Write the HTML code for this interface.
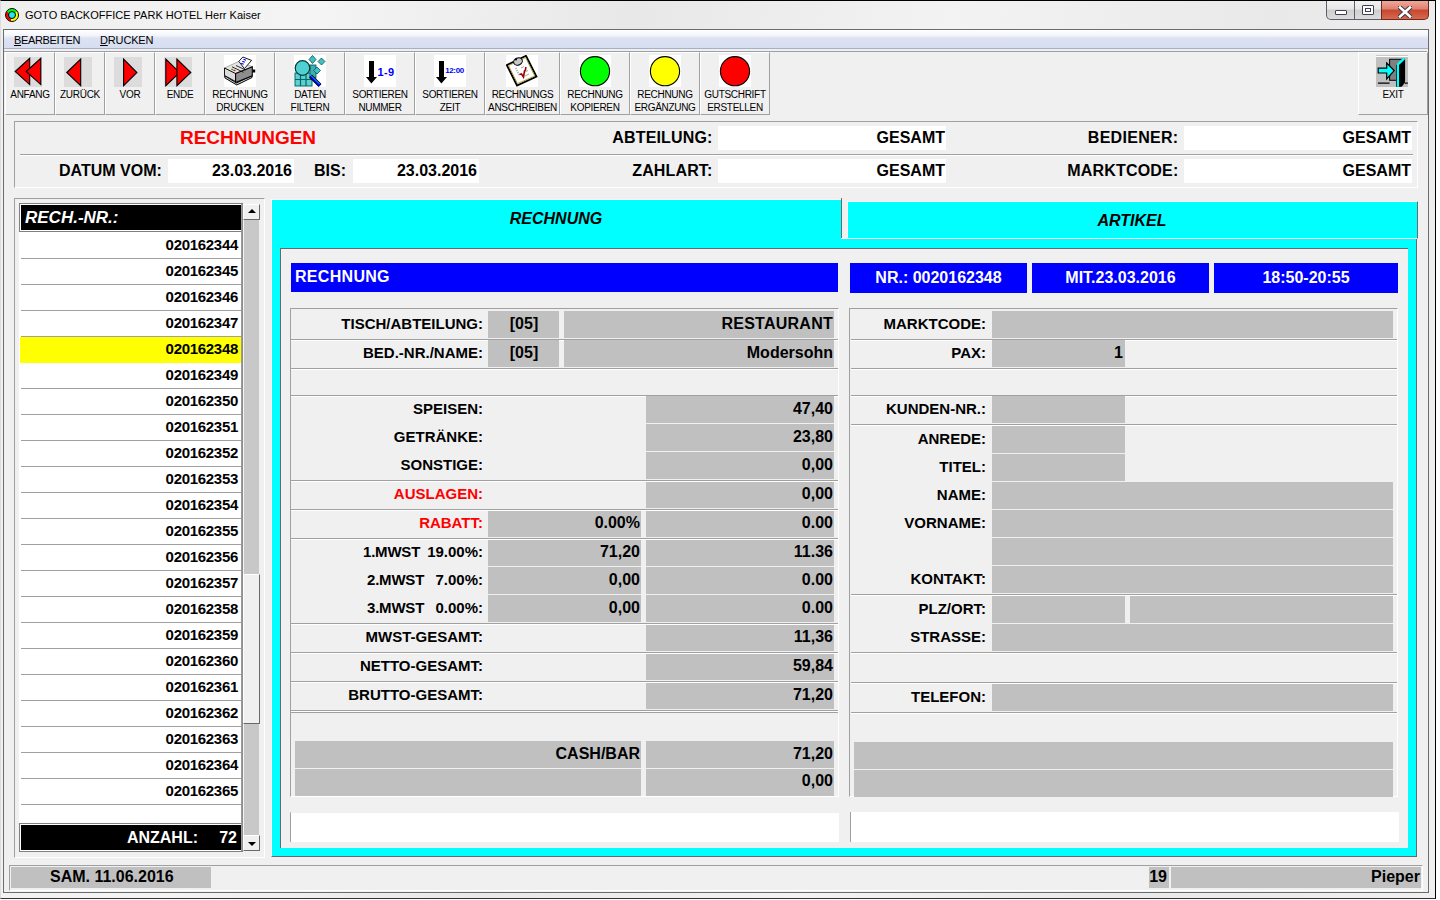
<!DOCTYPE html><html><head><meta charset='utf-8'><style>
html,body{margin:0;padding:0;}
body{width:1440px;height:900px;overflow:hidden;position:relative;background:#fff;font-family:"Liberation Sans",sans-serif;font-weight:bold;}
div{position:absolute;box-sizing:border-box;}
.t{white-space:nowrap;}
</style></head><body>

<div style='left:0px;top:0px;width:1436px;height:899px;background:linear-gradient(100deg,#efefef 0%,#f4f4f4 20%,#e8e8e8 40%,#f3f3f3 60%,#e9e9e9 80%,#f0f0f0 100%);border-top:1px solid #000;border-right:1px solid #000;border-bottom:1px solid #333;border-left:1px solid #dcdcdc;'></div>
<div style='left:3px;top:29px;width:1426px;height:864px;background:#f0f0f0;border:1px solid #6c6c6c;'></div>
<div style='left:5px;top:8px;width:14px;height:14px;border-radius:50%;background:conic-gradient(#00ff00 0deg 60deg,#ffff00 60deg 195deg,#ff0000 195deg 300deg,#00ff00 300deg 360deg);border:1px solid #000;'><div style='left:2px;top:2px;width:8px;height:8px;border-radius:50%;background:#20e8f0;border:1px solid #000;'></div></div>
<div class='t' style='top:10px;font-size:11px;line-height:11px;color:#000;font-weight:normal;left:25px;'>GOTO BACKOFFICE PARK HOTEL Herr Kaiser</div>
<div style='left:1326px;top:1px;width:56px;height:19px;border:1px solid #5a5f6a;border-top:none;border-radius:0 0 0 5px;background:linear-gradient(#f2f2f2 0%,#e6e6e6 45%,#cfcfcf 50%,#dcdcdc 100%);'></div>
<div style='left:1354px;top:1px;width:1px;height:18px;background:#5a5f6a;'></div>
<div style='left:1381px;top:1px;width:48px;height:19px;border:1px solid #6b2a20;border-top:none;border-radius:0 0 5px 0;background:linear-gradient(#f0a898 0%,#e08070 45%,#c8462e 50%,#d86850 100%);'></div>
<div style='left:1335px;top:10px;width:12px;height:5px;border:1px solid #3c4250;background:#fff;border-radius:1px;'></div>
<div style='left:1362px;top:5px;width:12px;height:10px;border:1px solid #3c4250;background:#fff;border-radius:1px;'><div style='left:2px;top:2px;width:6px;height:4px;border:1px solid #3c4250;'></div></div>
<div style='left:1398px;top:4px;width:14px;height:12px;'><svg width='14' height='12' viewBox='0 0 14 12'><path d='M2,1.5 L12,10.5 M12,1.5 L2,10.5' stroke='#3a3a4a' stroke-width='4.6' stroke-linecap='square'/><path d='M2,1.5 L12,10.5 M12,1.5 L2,10.5' stroke='#fff' stroke-width='2.6' stroke-linecap='square'/></svg></div>
<div style='left:4px;top:30px;width:1424px;height:19px;background:linear-gradient(#ffffff 0%,#f3f5fb 30%,#dde3f3 45%,#d7def0 100%);border-bottom:1px solid #a8b0c8;'></div>
<div class='t' style='top:35px;font-size:11px;line-height:11px;color:#000;font-weight:normal;left:14px;letter-spacing:-0.35px;'><u>B</u>EARBEITEN</div>
<div class='t' style='top:35px;font-size:11px;line-height:11px;color:#000;font-weight:normal;left:100px;letter-spacing:-0.15px;'><u>D</u>RUCKEN</div>
<div style='left:4px;top:51px;width:1423px;height:1px;background:#a0a0a0;'></div>
<div style='left:5px;top:52px;width:50px;height:63px;background:#f0f0f0;border-left:1px solid #fff;border-top:1px solid #fff;border-right:1px solid #a0a0a0;border-bottom:1px solid #a0a0a0;'></div>
<div class='t' style='top:90px;font-size:10px;line-height:10px;color:#000;font-weight:normal;left:-20.0px;width:100px;text-align:center;letter-spacing:-0.3px;'>ANFANG</div>
<div style='left:14px;top:57px;width:28px;height:30px;'><svg width='28' height='30' viewBox='0 0 28 30' style='display:block'><rect x='0' y='0' width='28' height='30' fill='#dcdcdc'/><polygon points='1.2,14.5 15.7,1.3 15.7,27.6' fill='#f00' stroke='#000' stroke-width='1.1' stroke-linejoin='miter'/><polygon points='12.2,14.5 26.8,1.3 26.8,27.6' fill='#f00' stroke='#000' stroke-width='1.1' stroke-linejoin='miter'/></svg></div>
<div style='left:55px;top:52px;width:50px;height:63px;background:#f0f0f0;border-left:1px solid #fff;border-top:1px solid #fff;border-right:1px solid #a0a0a0;border-bottom:1px solid #a0a0a0;'></div>
<div class='t' style='top:90px;font-size:10px;line-height:10px;color:#000;font-weight:normal;left:30.0px;width:100px;text-align:center;letter-spacing:-0.3px;'>ZURÜCK</div>
<div style='left:64px;top:57px;width:28px;height:30px;'><svg width='28' height='30' viewBox='0 0 28 30' style='display:block'><rect x='0' y='0' width='28' height='30' fill='#dcdcdc'/><polygon points='2.8,15.5 16.7,2 16.7,28.7' fill='#f00' stroke='#000' stroke-width='1.1' stroke-linejoin='miter'/></svg></div>
<div style='left:105px;top:52px;width:50px;height:63px;background:#f0f0f0;border-left:1px solid #fff;border-top:1px solid #fff;border-right:1px solid #a0a0a0;border-bottom:1px solid #a0a0a0;'></div>
<div class='t' style='top:90px;font-size:10px;line-height:10px;color:#000;font-weight:normal;left:80.0px;width:100px;text-align:center;letter-spacing:-0.3px;'>VOR</div>
<div style='left:114px;top:57px;width:28px;height:30px;'><svg width='28' height='30' viewBox='0 0 28 30' style='display:block'><rect x='0' y='0' width='28' height='30' fill='#dcdcdc'/><polygon points='9.6,2 9.6,28.7 22.9,15.5' fill='#f00' stroke='#000' stroke-width='1.1' stroke-linejoin='miter'/></svg></div>
<div style='left:155px;top:52px;width:50px;height:63px;background:#f0f0f0;border-left:1px solid #fff;border-top:1px solid #fff;border-right:1px solid #a0a0a0;border-bottom:1px solid #a0a0a0;'></div>
<div class='t' style='top:90px;font-size:10px;line-height:10px;color:#000;font-weight:normal;left:130.0px;width:100px;text-align:center;letter-spacing:-0.3px;'>ENDE</div>
<div style='left:164px;top:57px;width:28px;height:30px;'><svg width='28' height='30' viewBox='0 0 28 30' style='display:block'><rect x='0' y='0' width='28' height='30' fill='#dcdcdc'/><polygon points='1.8,2 1.8,28.7 15.7,15.5' fill='#f00' stroke='#000' stroke-width='1.1' stroke-linejoin='miter'/><polygon points='12.9,2 12.9,28.7 26.8,15.5' fill='#f00' stroke='#000' stroke-width='1.1' stroke-linejoin='miter'/></svg></div>
<div style='left:205px;top:52px;width:70px;height:63px;background:#f0f0f0;border-left:1px solid #fff;border-top:1px solid #fff;border-right:1px solid #a0a0a0;border-bottom:1px solid #a0a0a0;'></div>
<div class='t' style='top:90px;font-size:10px;line-height:10px;color:#000;font-weight:normal;left:190.0px;width:100px;text-align:center;letter-spacing:-0.3px;'>RECHNUNG</div>
<div class='t' style='top:103px;font-size:10px;line-height:10px;color:#000;font-weight:normal;left:190.0px;width:100px;text-align:center;letter-spacing:-0.3px;'>DRUCKEN</div>
<div style='left:224px;top:55px;width:32px;height:32px;'><svg width='32' height='32' viewBox='0 0 32 32' style='display:block'><rect width='32' height='32' fill='#fff'/><polygon points='0.5,20.5 12.5,28 28,20.5 28,22.5 12.8,30 1,23' fill='#d0d0d0' stroke='#000' stroke-width='1'/><polygon points='0.5,13 14.8,6.4 28.3,11.8 11.6,18.6' fill='#e4e4e4' stroke='#9a9a9a' stroke-width='0.8'/><polygon points='0.5,13 11.6,18.6 11.6,26.5 0.5,20.5' fill='#dcdcdc' stroke='#000' stroke-width='0.9'/><polygon points='11.6,18.6 28.3,11.8 28.3,20.8 11.6,27.5' fill='#8e8e8e' stroke='#000' stroke-width='1.1'/><rect x='28.6' y='14.5' width='2.6' height='3' fill='#000'/><polygon points='14.8,6.4 18.8,2 27.6,5.4 20.4,13.6' fill='#fff' stroke='#000' stroke-width='0.9'/><path d='M19.5,4.2 l2.5,1 M18.3,6.2 l2.5,1 M17.2,8.2 l2.5,1' stroke='#0000ff' stroke-width='1.2'/><rect x='7.2' y='13.8' width='2' height='1.3' fill='#00c000'/><rect x='9.4' y='14.8' width='2' height='1.3' fill='#ff0000'/><path d='M8,11.8 L19.5,17.3 M12,10.5 L21.5,15' stroke='#000' stroke-width='0.8'/></svg></div>
<div style='left:275px;top:52px;width:70px;height:63px;background:#f0f0f0;border-left:1px solid #fff;border-top:1px solid #fff;border-right:1px solid #a0a0a0;border-bottom:1px solid #a0a0a0;'></div>
<div class='t' style='top:90px;font-size:10px;line-height:10px;color:#000;font-weight:normal;left:260.0px;width:100px;text-align:center;letter-spacing:-0.3px;'>DATEN</div>
<div class='t' style='top:103px;font-size:10px;line-height:10px;color:#000;font-weight:normal;left:260.0px;width:100px;text-align:center;letter-spacing:-0.3px;'>FILTERN</div>
<div style='left:294px;top:55px;width:32px;height:32px;'><svg width='32' height='32' viewBox='0 0 32 32' style='display:block'><rect width='32' height='32' fill='#fff'/><rect x='1' y='18' width='17' height='13' fill='#5fcfcf' stroke='#006868' stroke-width='1'/><path d='M1,24.5 H18 M6.5,18 V31 M12,18 V31' stroke='#006868' stroke-width='1.2'/><rect x='16' y='10' width='6' height='13' fill='#3fb0b0' stroke='#005050' stroke-width='0.8'/><circle cx='8.5' cy='13' r='7.3' fill='#50d0d0' stroke='#003838' stroke-width='1.2'/><line x1='16.5' y1='21' x2='26' y2='30.5' stroke='#000' stroke-width='4'/><line x1='16.5' y1='21' x2='26' y2='30.5' stroke='#0000ff' stroke-width='2.4'/><line x1='17' y1='20.5' x2='25.5' y2='29' stroke='#00ffff' stroke-width='0.8'/><polygon points='18.5,0.5 22,4.5 18.5,8.5 15,4.5' fill='#40c0c0' stroke='#005858' stroke-width='0.8'/><polygon points='27.5,3 31,6.5 27.5,10 24,6.5' fill='#40c0c0' stroke='#005858' stroke-width='0.8'/><polygon points='23,12 26.5,15.5 23,19 19.5,15.5' fill='#40c0c0' stroke='#005858' stroke-width='0.8'/></svg></div>
<div style='left:345px;top:52px;width:70px;height:63px;background:#f0f0f0;border-left:1px solid #fff;border-top:1px solid #fff;border-right:1px solid #a0a0a0;border-bottom:1px solid #a0a0a0;'></div>
<div class='t' style='top:90px;font-size:10px;line-height:10px;color:#000;font-weight:normal;left:330.0px;width:100px;text-align:center;letter-spacing:-0.3px;'>SORTIEREN</div>
<div class='t' style='top:103px;font-size:10px;line-height:10px;color:#000;font-weight:normal;left:330.0px;width:100px;text-align:center;letter-spacing:-0.3px;'>NUMMER</div>
<div style='left:364px;top:55px;width:32px;height:32px;'><svg width='32' height='32' viewBox='0 0 32 32' style='display:block'><rect width='32' height='32' fill='#fff'/><polygon points='5,6 10,6 10,22 13,22 7.4,28.5 2,22 5,22' fill='#000'/><text x='13.5' y='21' font-family='Liberation Sans' font-weight='bold' font-size='11' fill='#0000ff' letter-spacing='0.3'>1-9</text></svg></div>
<div style='left:415px;top:52px;width:70px;height:63px;background:#f0f0f0;border-left:1px solid #fff;border-top:1px solid #fff;border-right:1px solid #a0a0a0;border-bottom:1px solid #a0a0a0;'></div>
<div class='t' style='top:90px;font-size:10px;line-height:10px;color:#000;font-weight:normal;left:400.0px;width:100px;text-align:center;letter-spacing:-0.3px;'>SORTIEREN</div>
<div class='t' style='top:103px;font-size:10px;line-height:10px;color:#000;font-weight:normal;left:400.0px;width:100px;text-align:center;letter-spacing:-0.3px;'>ZEIT</div>
<div style='left:434px;top:55px;width:32px;height:32px;'><svg width='32' height='32' viewBox='0 0 32 32' style='display:block'><rect width='32' height='32' fill='#fff'/><polygon points='5,6 10,6 10,22 13,22 7.4,28.5 2,22 5,22' fill='#000'/><text x='11.2' y='18' font-family='Liberation Sans' font-weight='bold' font-size='8' fill='#0000ff' textLength='19'>12:00</text></svg></div>
<div style='left:485px;top:52px;width:75px;height:63px;background:#f0f0f0;border-left:1px solid #fff;border-top:1px solid #fff;border-right:1px solid #a0a0a0;border-bottom:1px solid #a0a0a0;'></div>
<div class='t' style='top:90px;font-size:10px;line-height:10px;color:#000;font-weight:normal;left:472.5px;width:100px;text-align:center;letter-spacing:-0.3px;'>RECHNUNGS</div>
<div class='t' style='top:103px;font-size:10px;line-height:10px;color:#000;font-weight:normal;left:472.5px;width:100px;text-align:center;letter-spacing:-0.3px;'>ANSCHREIBEN</div>
<div style='left:506px;top:55px;width:32px;height:32px;'><svg width='32' height='32' viewBox='0 0 32 32' style='display:block'><rect width='32' height='32' fill='#fff'/><polygon points='0.8,10 20,0.8 30.5,21.5 11,30.5' fill='#fff' stroke='#000' stroke-width='1.8'/><polygon points='2.6,10.6 19.6,2.6 28.7,21 11.5,28.6' fill='none' stroke='#a09020' stroke-width='0.8'/><ellipse cx='12' cy='6.5' rx='4.5' ry='3.5' fill='#c8c8c8' stroke='#000' stroke-width='1' transform='rotate(-25 12 6.5)'/><circle cx='10' cy='4.5' r='1' fill='#000'/><path d='M9,14 l2,-1 M10,16 l2,-1 M11,18 l2,-1 M12,20 l2,-1 M15,13 l3,-1.5 M19,17 l3,-1.5 M19,21 l4,-2' stroke='#909090' stroke-width='0.8'/><path d='M13.5,19.5 L15.5,19 L17.5,22 L18.5,16 L19.5,15 L19.8,12' stroke='#a00000' stroke-width='1.6' fill='none'/></svg></div>
<div style='left:560px;top:52px;width:70px;height:63px;background:#f0f0f0;border-left:1px solid #fff;border-top:1px solid #fff;border-right:1px solid #a0a0a0;border-bottom:1px solid #a0a0a0;'></div>
<div class='t' style='top:90px;font-size:10px;line-height:10px;color:#000;font-weight:normal;left:545.0px;width:100px;text-align:center;letter-spacing:-0.3px;'>RECHNUNG</div>
<div class='t' style='top:103px;font-size:10px;line-height:10px;color:#000;font-weight:normal;left:545.0px;width:100px;text-align:center;letter-spacing:-0.3px;'>KOPIEREN</div>
<div style='left:579px;top:55px;width:32px;height:32px;'><svg width='32' height='32' viewBox='0 0 32 32' style='display:block'><rect width='32' height='32' fill='#fff'/><circle cx='16' cy='16.2' r='14.6' fill='#00ff00' stroke='#000' stroke-width='1.1'/></svg></div>
<div style='left:630px;top:52px;width:70px;height:63px;background:#f0f0f0;border-left:1px solid #fff;border-top:1px solid #fff;border-right:1px solid #a0a0a0;border-bottom:1px solid #a0a0a0;'></div>
<div class='t' style='top:90px;font-size:10px;line-height:10px;color:#000;font-weight:normal;left:615.0px;width:100px;text-align:center;letter-spacing:-0.3px;'>RECHNUNG</div>
<div class='t' style='top:103px;font-size:10px;line-height:10px;color:#000;font-weight:normal;left:615.0px;width:100px;text-align:center;letter-spacing:-0.3px;'>ERGÄNZUNG</div>
<div style='left:649px;top:55px;width:32px;height:32px;'><svg width='32' height='32' viewBox='0 0 32 32' style='display:block'><rect width='32' height='32' fill='#fff'/><circle cx='16' cy='16.2' r='14.6' fill='#ffff00' stroke='#000' stroke-width='1.1'/></svg></div>
<div style='left:700px;top:52px;width:70px;height:63px;background:#f0f0f0;border-left:1px solid #fff;border-top:1px solid #fff;border-right:1px solid #a0a0a0;border-bottom:1px solid #a0a0a0;'></div>
<div class='t' style='top:90px;font-size:10px;line-height:10px;color:#000;font-weight:normal;left:685.0px;width:100px;text-align:center;letter-spacing:-0.3px;'>GUTSCHRIFT</div>
<div class='t' style='top:103px;font-size:10px;line-height:10px;color:#000;font-weight:normal;left:685.0px;width:100px;text-align:center;letter-spacing:-0.3px;'>ERSTELLEN</div>
<div style='left:719px;top:55px;width:32px;height:32px;'><svg width='32' height='32' viewBox='0 0 32 32' style='display:block'><rect width='32' height='32' fill='#fff'/><circle cx='16' cy='16.2' r='14.6' fill='#ff0000' stroke='#000' stroke-width='1.1'/></svg></div>
<div style='left:1358px;top:52px;width:70px;height:63px;background:#f0f0f0;border-left:1px solid #fff;border-top:1px solid #fff;border-right:1px solid #a0a0a0;border-bottom:1px solid #a0a0a0;'></div>
<div class='t' style='top:90px;font-size:10px;line-height:10px;color:#000;font-weight:normal;left:1343.0px;width:100px;text-align:center;letter-spacing:-0.3px;'>EXIT</div>
<div style='left:1376px;top:55px;width:32px;height:32px;'><svg width='32' height='32' viewBox='0 0 32 32' style='display:block'><rect x='0' y='0' width='32' height='1' fill='#c8c8c8'/><rect x='0' y='1' width='32' height='1' fill='#fff'/><rect x='0' y='2' width='32' height='30' fill='#c0c0c0'/><rect x='13.6' y='4.3' width='15' height='21' fill='#808080' stroke='#000' stroke-width='1'/><polygon points='20,10.2 28.9,3.5 28.9,27.6 25.8,31.8 20,31.8' fill='#000'/><path d='M21.9,31.8 V9.5 L28.3,3.3' stroke='#00ffff' stroke-width='2.3' fill='none'/><polygon points='2.2,13.2 10.7,13.2 10.7,8 18.2,15.6 10.7,24 10.7,18 2.2,18' fill='#00ffff' stroke='#000' stroke-width='1.2'/><path d='M2,28.2 H13.6 M28.9,28.2 H31.8' stroke='#000' stroke-width='1.2'/></svg></div>
<div style='left:14px;top:121px;width:1404px;height:67px;border-top:1px solid #a0a0a0;border-left:1px solid #a0a0a0;border-right:1px solid #fff;border-bottom:1px solid #fff;'></div>
<div style='left:20px;top:154px;width:1393px;height:1px;background:#a0a0a0;'></div>
<div style='left:20px;top:155px;width:1393px;height:1px;background:#ffffff;'></div>
<div class='t' style='top:128px;font-size:19px;line-height:19px;color:#ff0000;left:98.0px;width:300px;text-align:center;'>RECHNUNGEN</div>
<div class='t' style='top:130px;font-size:16px;line-height:16px;color:#000;left:312.5px;width:400px;text-align:right;letter-spacing:0.15px;'>ABTEILUNG:</div>
<div style='left:718px;top:126px;width:228px;height:24px;background:#fff;'></div>
<div class='t' style='top:130px;font-size:16px;line-height:16px;color:#000;left:545px;width:400px;text-align:right;'>GESAMT</div>
<div class='t' style='top:130px;font-size:16px;line-height:16px;color:#000;left:778.5px;width:400px;text-align:right;letter-spacing:0.3px;'>BEDIENER:</div>
<div style='left:1184px;top:126px;width:228px;height:24px;background:#fff;'></div>
<div class='t' style='top:130px;font-size:16px;line-height:16px;color:#000;left:1011px;width:400px;text-align:right;'>GESAMT</div>
<div class='t' style='top:163px;font-size:16px;line-height:16px;color:#000;left:59px;'>DATUM VOM:</div>
<div style='left:168px;top:159px;width:126px;height:24px;background:#fff;'></div>
<div class='t' style='top:163px;font-size:16px;line-height:16px;color:#000;left:-108px;width:400px;text-align:right;'>23.03.2016</div>
<div class='t' style='top:163px;font-size:16px;line-height:16px;color:#000;left:314px;'>BIS:</div>
<div style='left:353px;top:159px;width:126px;height:24px;background:#fff;'></div>
<div class='t' style='top:163px;font-size:16px;line-height:16px;color:#000;left:77px;width:400px;text-align:right;'>23.03.2016</div>
<div class='t' style='top:163px;font-size:16px;line-height:16px;color:#000;left:312.5px;width:400px;text-align:right;letter-spacing:0.15px;'>ZAHLART:</div>
<div style='left:718px;top:159px;width:228px;height:24px;background:#fff;'></div>
<div class='t' style='top:163px;font-size:16px;line-height:16px;color:#000;left:545px;width:400px;text-align:right;'>GESAMT</div>
<div class='t' style='top:163px;font-size:16px;line-height:16px;color:#000;left:778.5px;width:400px;text-align:right;letter-spacing:0.2px;'>MARKTCODE:</div>
<div style='left:1184px;top:159px;width:228px;height:24px;background:#fff;'></div>
<div class='t' style='top:163px;font-size:16px;line-height:16px;color:#000;left:1011px;width:400px;text-align:right;'>GESAMT</div>
<div style='left:14px;top:198px;width:251px;height:660px;border-top:1px solid #a0a0a0;border-left:1px solid #a0a0a0;border-right:1px solid #fff;border-bottom:1px solid #fff;'></div>
<div style='left:19px;top:203px;width:224px;height:29px;background:#000;border:1px solid #808080;box-shadow:inset 1px 1px 0 #fff,inset -1px -1px 0 #fff;'></div>
<div class='t' style='top:209px;font-size:17px;line-height:17px;color:#fff;font-style:italic;left:25px;'>RECH.-NR.:</div>
<div style='left:19px;top:232px;width:222px;height:591px;background:#fff;'></div>
<div style='left:21px;top:258px;width:220px;height:1px;background:#a0a0a0;'></div>
<div class='t' style='top:237px;font-size:15px;line-height:15px;color:#000;left:-162px;width:400px;text-align:right;letter-spacing:-0.3px;'>020162344</div>
<div style='left:21px;top:284px;width:220px;height:1px;background:#a0a0a0;'></div>
<div class='t' style='top:263px;font-size:15px;line-height:15px;color:#000;left:-162px;width:400px;text-align:right;letter-spacing:-0.3px;'>020162345</div>
<div style='left:21px;top:310px;width:220px;height:1px;background:#a0a0a0;'></div>
<div class='t' style='top:289px;font-size:15px;line-height:15px;color:#000;left:-162px;width:400px;text-align:right;letter-spacing:-0.3px;'>020162346</div>
<div style='left:21px;top:336px;width:220px;height:1px;background:#a0a0a0;'></div>
<div class='t' style='top:315px;font-size:15px;line-height:15px;color:#000;left:-162px;width:400px;text-align:right;letter-spacing:-0.3px;'>020162347</div>
<div style='left:20px;top:337px;width:221px;height:26px;background:#ffff00;'></div>
<div class='t' style='top:341px;font-size:15px;line-height:15px;color:#000;left:-162px;width:400px;text-align:right;letter-spacing:-0.3px;'>020162348</div>
<div style='left:21px;top:388px;width:220px;height:1px;background:#a0a0a0;'></div>
<div class='t' style='top:367px;font-size:15px;line-height:15px;color:#000;left:-162px;width:400px;text-align:right;letter-spacing:-0.3px;'>020162349</div>
<div style='left:21px;top:414px;width:220px;height:1px;background:#a0a0a0;'></div>
<div class='t' style='top:393px;font-size:15px;line-height:15px;color:#000;left:-162px;width:400px;text-align:right;letter-spacing:-0.3px;'>020162350</div>
<div style='left:21px;top:440px;width:220px;height:1px;background:#a0a0a0;'></div>
<div class='t' style='top:419px;font-size:15px;line-height:15px;color:#000;left:-162px;width:400px;text-align:right;letter-spacing:-0.3px;'>020162351</div>
<div style='left:21px;top:466px;width:220px;height:1px;background:#a0a0a0;'></div>
<div class='t' style='top:445px;font-size:15px;line-height:15px;color:#000;left:-162px;width:400px;text-align:right;letter-spacing:-0.3px;'>020162352</div>
<div style='left:21px;top:492px;width:220px;height:1px;background:#a0a0a0;'></div>
<div class='t' style='top:471px;font-size:15px;line-height:15px;color:#000;left:-162px;width:400px;text-align:right;letter-spacing:-0.3px;'>020162353</div>
<div style='left:21px;top:518px;width:220px;height:1px;background:#a0a0a0;'></div>
<div class='t' style='top:497px;font-size:15px;line-height:15px;color:#000;left:-162px;width:400px;text-align:right;letter-spacing:-0.3px;'>020162354</div>
<div style='left:21px;top:544px;width:220px;height:1px;background:#a0a0a0;'></div>
<div class='t' style='top:523px;font-size:15px;line-height:15px;color:#000;left:-162px;width:400px;text-align:right;letter-spacing:-0.3px;'>020162355</div>
<div style='left:21px;top:570px;width:220px;height:1px;background:#a0a0a0;'></div>
<div class='t' style='top:549px;font-size:15px;line-height:15px;color:#000;left:-162px;width:400px;text-align:right;letter-spacing:-0.3px;'>020162356</div>
<div style='left:21px;top:596px;width:220px;height:1px;background:#a0a0a0;'></div>
<div class='t' style='top:575px;font-size:15px;line-height:15px;color:#000;left:-162px;width:400px;text-align:right;letter-spacing:-0.3px;'>020162357</div>
<div style='left:21px;top:622px;width:220px;height:1px;background:#a0a0a0;'></div>
<div class='t' style='top:601px;font-size:15px;line-height:15px;color:#000;left:-162px;width:400px;text-align:right;letter-spacing:-0.3px;'>020162358</div>
<div style='left:21px;top:648px;width:220px;height:1px;background:#a0a0a0;'></div>
<div class='t' style='top:627px;font-size:15px;line-height:15px;color:#000;left:-162px;width:400px;text-align:right;letter-spacing:-0.3px;'>020162359</div>
<div style='left:21px;top:674px;width:220px;height:1px;background:#a0a0a0;'></div>
<div class='t' style='top:653px;font-size:15px;line-height:15px;color:#000;left:-162px;width:400px;text-align:right;letter-spacing:-0.3px;'>020162360</div>
<div style='left:21px;top:700px;width:220px;height:1px;background:#a0a0a0;'></div>
<div class='t' style='top:679px;font-size:15px;line-height:15px;color:#000;left:-162px;width:400px;text-align:right;letter-spacing:-0.3px;'>020162361</div>
<div style='left:21px;top:726px;width:220px;height:1px;background:#a0a0a0;'></div>
<div class='t' style='top:705px;font-size:15px;line-height:15px;color:#000;left:-162px;width:400px;text-align:right;letter-spacing:-0.3px;'>020162362</div>
<div style='left:21px;top:752px;width:220px;height:1px;background:#a0a0a0;'></div>
<div class='t' style='top:731px;font-size:15px;line-height:15px;color:#000;left:-162px;width:400px;text-align:right;letter-spacing:-0.3px;'>020162363</div>
<div style='left:21px;top:778px;width:220px;height:1px;background:#a0a0a0;'></div>
<div class='t' style='top:757px;font-size:15px;line-height:15px;color:#000;left:-162px;width:400px;text-align:right;letter-spacing:-0.3px;'>020162364</div>
<div style='left:21px;top:804px;width:220px;height:1px;background:#a0a0a0;'></div>
<div class='t' style='top:783px;font-size:15px;line-height:15px;color:#000;left:-162px;width:400px;text-align:right;letter-spacing:-0.3px;'>020162365</div>
<div style='left:19px;top:823px;width:224px;height:29px;background:#000;border:1px solid #808080;box-shadow:inset 1px 1px 0 #fff,inset -1px -1px 0 #fff;'></div>
<div class='t' style='top:830px;font-size:16px;line-height:16px;color:#fff;left:-202px;width:400px;text-align:right;'>ANZAHL:</div>
<div class='t' style='top:830px;font-size:16px;line-height:16px;color:#fff;left:-163px;width:400px;text-align:right;'>72</div>
<div style='left:241px;top:204px;width:2px;height:647px;background:linear-gradient(90deg,#a0a0a0,#888);'></div>
<div style='left:243px;top:204px;width:17px;height:647px;background:#c8c8c8;border-left:1px solid #f4f4f4;border-right:1px solid #f0f0f0;'></div>
<div style='left:243px;top:204px;width:17px;height:16px;background:#f0f0f0;border-left:1px solid #fff;border-top:1px solid #fff;border-right:1px solid #696969;border-bottom:1px solid #696969;'></div>
<div style='left:248px;top:209px;width:0;height:0;border-left:4px solid transparent;border-right:4px solid transparent;border-bottom:4px solid #000;'></div>
<div style='left:243px;top:574px;width:17px;height:150px;background:#f0f0f0;border-left:1px solid #fff;border-top:1px solid #fff;border-right:1px solid #696969;border-bottom:1px solid #696969;'></div>
<div style='left:243px;top:835px;width:17px;height:16px;background:#f0f0f0;border-left:1px solid #fff;border-top:1px solid #fff;border-right:1px solid #696969;border-bottom:1px solid #696969;'></div>
<div style='left:248px;top:842px;width:0;height:0;border-left:4px solid transparent;border-right:4px solid transparent;border-top:4px solid #000;'></div>
<div style='left:271px;top:199px;width:1146px;height:658px;background:#00ffff;border-top:1px solid #fff;border-left:1px solid #fff;border-right:1px solid #696969;border-bottom:1px solid #696969;'></div>
<div style='left:841px;top:198px;width:577px;height:3px;background:#f0f0f0;'></div>
<div style='left:841px;top:198px;width:6px;height:41px;background:#f0f0f0;'></div>
<div style='left:841px;top:198px;width:1px;height:41px;background:#696969;'></div>
<div style='left:847px;top:201px;width:571px;height:38px;background:#00ffff;border-top:1px solid #fff;border-left:1px solid #fff;border-right:1px solid #696969;border-bottom:1px solid #fff;'></div>
<div style='left:841px;top:238px;width:576px;height:1px;background:#fff;'></div>
<div class='t' style='top:211px;font-size:16px;line-height:16px;color:#000;font-style:italic;left:406.0px;width:300px;text-align:center;'>RECHNUNG</div>
<div class='t' style='top:213px;font-size:16px;line-height:16px;color:#000;font-style:italic;left:982.0px;width:300px;text-align:center;'>ARTIKEL</div>
<div style='left:280px;top:248px;width:1128px;height:600px;background:#f0f0f0;border-top:1px solid #696969;border-left:1px solid #696969;'></div>
<div style='left:291px;top:263px;width:547px;height:29px;background:#0000ff;'></div>
<div class='t' style='top:269px;font-size:16px;line-height:16px;color:#fff;left:295px;letter-spacing:0.3px;'>RECHNUNG</div>
<div style='left:850px;top:263px;width:177px;height:30px;background:#0000ff;'></div>
<div class='t' style='top:270px;font-size:16px;line-height:16px;color:#fff;left:850.0px;width:177px;text-align:center;'>NR.: 0020162348</div>
<div style='left:1032px;top:263px;width:177px;height:30px;background:#0000ff;'></div>
<div class='t' style='top:270px;font-size:16px;line-height:16px;color:#fff;left:1032.0px;width:177px;text-align:center;'>MIT.23.03.2016</div>
<div style='left:1214px;top:263px;width:184px;height:30px;background:#0000ff;'></div>
<div class='t' style='top:270px;font-size:16px;line-height:16px;color:#fff;left:1214.0px;width:184px;text-align:center;'>18:50-20:55</div>
<div style='left:290px;top:308px;width:549px;height:489px;border-top:1px solid #a0a0a0;border-left:1px solid #a0a0a0;border-right:1px solid #fff;border-bottom:1px solid #fff;'></div>
<div class='t' style='top:316px;font-size:15px;line-height:15px;color:#000;left:83px;width:400px;text-align:right;'>TISCH/ABTEILUNG:</div>
<div style='left:488px;top:311px;width:71px;height:27px;background:#c0c0c0;'></div>
<div class='t' style='top:316px;font-size:16px;line-height:16px;color:#000;left:488.5px;width:71px;text-align:center;'>[05]</div>
<div style='left:564px;top:311px;width:270px;height:27px;background:#c0c0c0;'></div>
<div class='t' style='top:316px;font-size:16px;line-height:16px;color:#000;left:433px;width:400px;text-align:right;letter-spacing:0.25px;'>RESTAURANT</div>
<div style='left:291px;top:339px;width:547px;height:1px;background:#a0a0a0;'></div>
<div style='left:291px;top:340px;width:547px;height:1px;background:#ffffff;'></div>
<div class='t' style='top:345px;font-size:15px;line-height:15px;color:#000;left:83px;width:400px;text-align:right;'>BED.-NR./NAME:</div>
<div style='left:488px;top:340px;width:71px;height:27px;background:#c0c0c0;'></div>
<div class='t' style='top:345px;font-size:16px;line-height:16px;color:#000;left:488.5px;width:71px;text-align:center;'>[05]</div>
<div style='left:564px;top:340px;width:270px;height:27px;background:#c0c0c0;'></div>
<div class='t' style='top:345px;font-size:16px;line-height:16px;color:#000;left:433px;width:400px;text-align:right;'>Modersohn</div>
<div style='left:291px;top:368px;width:547px;height:1px;background:#a0a0a0;'></div>
<div style='left:291px;top:369px;width:547px;height:1px;background:#ffffff;'></div>
<div style='left:291px;top:395px;width:547px;height:1px;background:#a0a0a0;'></div>
<div style='left:291px;top:396px;width:547px;height:1px;background:#ffffff;'></div>
<div class='t' style='top:401px;font-size:15px;line-height:15px;color:#000;left:83px;width:400px;text-align:right;'>SPEISEN:</div>
<div style='left:646px;top:396px;width:188px;height:27px;background:#c0c0c0;'></div>
<div class='t' style='top:401px;font-size:16px;line-height:16px;color:#000;left:433px;width:400px;text-align:right;'>47,40</div>
<div class='t' style='top:429px;font-size:15px;line-height:15px;color:#000;left:83px;width:400px;text-align:right;'>GETRÄNKE:</div>
<div style='left:646px;top:424px;width:188px;height:27px;background:#c0c0c0;'></div>
<div class='t' style='top:429px;font-size:16px;line-height:16px;color:#000;left:433px;width:400px;text-align:right;'>23,80</div>
<div class='t' style='top:457px;font-size:15px;line-height:15px;color:#000;left:83px;width:400px;text-align:right;'>SONSTIGE:</div>
<div style='left:646px;top:452px;width:188px;height:27px;background:#c0c0c0;'></div>
<div class='t' style='top:457px;font-size:16px;line-height:16px;color:#000;left:433px;width:400px;text-align:right;'>0,00</div>
<div class='t' style='top:486px;font-size:15px;line-height:15px;color:#ff0000;left:83px;width:400px;text-align:right;'>AUSLAGEN:</div>
<div style='left:646px;top:481px;width:188px;height:27px;background:#c0c0c0;'></div>
<div class='t' style='top:486px;font-size:16px;line-height:16px;color:#000;left:433px;width:400px;text-align:right;'>0,00</div>
<div class='t' style='top:515px;font-size:15px;line-height:15px;color:#ff0000;left:83px;width:400px;text-align:right;'>RABATT:</div>
<div style='left:488px;top:510px;width:153px;height:27px;background:#c0c0c0;'></div>
<div class='t' style='top:515px;font-size:16px;line-height:16px;color:#000;left:240px;width:400px;text-align:right;'>0.00%</div>
<div style='left:646px;top:510px;width:188px;height:27px;background:#c0c0c0;'></div>
<div class='t' style='top:515px;font-size:16px;line-height:16px;color:#000;left:433px;width:400px;text-align:right;'>0.00</div>
<div class='t' style='top:544px;font-size:15px;line-height:15px;color:#000;left:83px;width:400px;text-align:right;'>19.00%:</div>
<div style='left:488px;top:539px;width:153px;height:27px;background:#c0c0c0;'></div>
<div class='t' style='top:544px;font-size:16px;line-height:16px;color:#000;left:240px;width:400px;text-align:right;'>71,20</div>
<div style='left:646px;top:539px;width:188px;height:27px;background:#c0c0c0;'></div>
<div class='t' style='top:544px;font-size:16px;line-height:16px;color:#000;left:433px;width:400px;text-align:right;'>11.36</div>
<div class='t' style='top:572px;font-size:15px;line-height:15px;color:#000;left:83px;width:400px;text-align:right;'>7.00%:</div>
<div style='left:488px;top:567px;width:153px;height:27px;background:#c0c0c0;'></div>
<div class='t' style='top:572px;font-size:16px;line-height:16px;color:#000;left:240px;width:400px;text-align:right;'>0,00</div>
<div style='left:646px;top:567px;width:188px;height:27px;background:#c0c0c0;'></div>
<div class='t' style='top:572px;font-size:16px;line-height:16px;color:#000;left:433px;width:400px;text-align:right;'>0.00</div>
<div class='t' style='top:600px;font-size:15px;line-height:15px;color:#000;left:83px;width:400px;text-align:right;'>0.00%:</div>
<div style='left:488px;top:595px;width:153px;height:27px;background:#c0c0c0;'></div>
<div class='t' style='top:600px;font-size:16px;line-height:16px;color:#000;left:240px;width:400px;text-align:right;'>0,00</div>
<div style='left:646px;top:595px;width:188px;height:27px;background:#c0c0c0;'></div>
<div class='t' style='top:600px;font-size:16px;line-height:16px;color:#000;left:433px;width:400px;text-align:right;'>0.00</div>
<div class='t' style='top:629px;font-size:15px;line-height:15px;color:#000;left:83px;width:400px;text-align:right;'>MWST-GESAMT:</div>
<div style='left:646px;top:624px;width:188px;height:27px;background:#c0c0c0;'></div>
<div class='t' style='top:629px;font-size:16px;line-height:16px;color:#000;left:433px;width:400px;text-align:right;'>11,36</div>
<div class='t' style='top:658px;font-size:15px;line-height:15px;color:#000;left:83px;width:400px;text-align:right;'>NETTO-GESAMT:</div>
<div style='left:646px;top:653px;width:188px;height:27px;background:#c0c0c0;'></div>
<div class='t' style='top:658px;font-size:16px;line-height:16px;color:#000;left:433px;width:400px;text-align:right;'>59,84</div>
<div class='t' style='top:687px;font-size:15px;line-height:15px;color:#000;left:83px;width:400px;text-align:right;'>BRUTTO-GESAMT:</div>
<div style='left:646px;top:682px;width:188px;height:27px;background:#c0c0c0;'></div>
<div class='t' style='top:687px;font-size:16px;line-height:16px;color:#000;left:433px;width:400px;text-align:right;'>71,20</div>
<div class='t' style='top:544px;font-size:15px;line-height:15px;color:#000;left:363px;letter-spacing:-0.2px;'>1.MWST</div>
<div class='t' style='top:572px;font-size:15px;line-height:15px;color:#000;left:367px;letter-spacing:-0.2px;'>2.MWST</div>
<div class='t' style='top:600px;font-size:15px;line-height:15px;color:#000;left:367px;letter-spacing:-0.2px;'>3.MWST</div>
<div style='left:291px;top:480px;width:547px;height:1px;background:#a0a0a0;'></div>
<div style='left:291px;top:481px;width:547px;height:1px;background:#ffffff;'></div>
<div style='left:291px;top:509px;width:547px;height:1px;background:#a0a0a0;'></div>
<div style='left:291px;top:510px;width:547px;height:1px;background:#ffffff;'></div>
<div style='left:291px;top:538px;width:547px;height:1px;background:#a0a0a0;'></div>
<div style='left:291px;top:539px;width:547px;height:1px;background:#ffffff;'></div>
<div style='left:291px;top:623px;width:547px;height:1px;background:#a0a0a0;'></div>
<div style='left:291px;top:624px;width:547px;height:1px;background:#ffffff;'></div>
<div style='left:291px;top:652px;width:547px;height:1px;background:#a0a0a0;'></div>
<div style='left:291px;top:653px;width:547px;height:1px;background:#ffffff;'></div>
<div style='left:291px;top:681px;width:547px;height:1px;background:#a0a0a0;'></div>
<div style='left:291px;top:682px;width:547px;height:1px;background:#ffffff;'></div>
<div style='left:291px;top:710px;width:547px;height:1px;background:#a0a0a0;'></div>
<div style='left:291px;top:711px;width:547px;height:1px;background:#ffffff;'></div>
<div style='left:291px;top:712px;width:547px;height:1px;background:#a0a0a0;'></div>
<div style='left:295px;top:741px;width:346px;height:27px;background:#c0c0c0;'></div>
<div class='t' style='top:746px;font-size:16px;line-height:16px;color:#000;left:240px;width:400px;text-align:right;'>CASH/BAR</div>
<div style='left:646px;top:741px;width:188px;height:27px;background:#c0c0c0;'></div>
<div class='t' style='top:746px;font-size:16px;line-height:16px;color:#000;left:433px;width:400px;text-align:right;'>71,20</div>
<div style='left:295px;top:769px;width:346px;height:27px;background:#c0c0c0;'></div>
<div style='left:646px;top:769px;width:188px;height:27px;background:#c0c0c0;'></div>
<div class='t' style='top:773px;font-size:16px;line-height:16px;color:#000;left:433px;width:400px;text-align:right;'>0,00</div>
<div style='left:290px;top:812px;width:549px;height:30px;background:#fff;border-left:1px solid #a0a0a0;border-top:1px solid #f0f0f0;'></div>
<div style='left:849px;top:308px;width:549px;height:489px;border-top:1px solid #a0a0a0;border-left:1px solid #a0a0a0;border-right:1px solid #fff;border-bottom:1px solid #fff;'></div>
<div class='t' style='top:316px;font-size:15px;line-height:15px;color:#000;left:586px;width:400px;text-align:right;'>MARKTCODE:</div>
<div style='left:992px;top:311px;width:401px;height:27px;background:#c0c0c0;'></div>
<div style='left:851px;top:339px;width:546px;height:1px;background:#a0a0a0;'></div>
<div style='left:851px;top:340px;width:546px;height:1px;background:#ffffff;'></div>
<div class='t' style='top:345px;font-size:15px;line-height:15px;color:#000;left:586px;width:400px;text-align:right;'>PAX:</div>
<div style='left:992px;top:340px;width:133px;height:27px;background:#c0c0c0;'></div>
<div class='t' style='top:345px;font-size:16px;line-height:16px;color:#000;left:723px;width:400px;text-align:right;'>1</div>
<div style='left:851px;top:368px;width:546px;height:1px;background:#a0a0a0;'></div>
<div style='left:851px;top:369px;width:546px;height:1px;background:#ffffff;'></div>
<div style='left:851px;top:395px;width:546px;height:1px;background:#a0a0a0;'></div>
<div style='left:851px;top:396px;width:546px;height:1px;background:#ffffff;'></div>
<div class='t' style='top:401px;font-size:15px;line-height:15px;color:#000;left:586px;width:400px;text-align:right;'>KUNDEN-NR.:</div>
<div style='left:992px;top:396px;width:133px;height:27px;background:#c0c0c0;'></div>
<div style='left:851px;top:424px;width:546px;height:1px;background:#a0a0a0;'></div>
<div style='left:851px;top:425px;width:546px;height:1px;background:#ffffff;'></div>
<div class='t' style='top:431px;font-size:15px;line-height:15px;color:#000;left:586px;width:400px;text-align:right;'>ANREDE:</div>
<div style='left:992px;top:426px;width:133px;height:27px;background:#c0c0c0;'></div>
<div class='t' style='top:459px;font-size:15px;line-height:15px;color:#000;left:586px;width:400px;text-align:right;'>TITEL:</div>
<div style='left:992px;top:454px;width:133px;height:27px;background:#c0c0c0;'></div>
<div class='t' style='top:487px;font-size:15px;line-height:15px;color:#000;left:586px;width:400px;text-align:right;'>NAME:</div>
<div style='left:992px;top:482px;width:401px;height:27px;background:#c0c0c0;'></div>
<div class='t' style='top:515px;font-size:15px;line-height:15px;color:#000;left:586px;width:400px;text-align:right;'>VORNAME:</div>
<div style='left:992px;top:510px;width:401px;height:27px;background:#c0c0c0;'></div>
<div style='left:992px;top:538px;width:401px;height:27px;background:#c0c0c0;'></div>
<div class='t' style='top:571px;font-size:15px;line-height:15px;color:#000;left:586px;width:400px;text-align:right;'>KONTAKT:</div>
<div style='left:992px;top:566px;width:401px;height:27px;background:#c0c0c0;'></div>
<div style='left:851px;top:594px;width:546px;height:1px;background:#a0a0a0;'></div>
<div style='left:851px;top:595px;width:546px;height:1px;background:#ffffff;'></div>
<div class='t' style='top:601px;font-size:15px;line-height:15px;color:#000;left:586px;width:400px;text-align:right;'>PLZ/ORT:</div>
<div style='left:992px;top:596px;width:133px;height:27px;background:#c0c0c0;'></div>
<div style='left:1130px;top:596px;width:263px;height:27px;background:#c0c0c0;'></div>
<div class='t' style='top:629px;font-size:15px;line-height:15px;color:#000;left:586px;width:400px;text-align:right;'>STRASSE:</div>
<div style='left:992px;top:624px;width:401px;height:27px;background:#c0c0c0;'></div>
<div style='left:851px;top:652px;width:546px;height:1px;background:#a0a0a0;'></div>
<div style='left:851px;top:653px;width:546px;height:1px;background:#ffffff;'></div>
<div style='left:851px;top:682px;width:546px;height:1px;background:#a0a0a0;'></div>
<div style='left:851px;top:683px;width:546px;height:1px;background:#ffffff;'></div>
<div class='t' style='top:689px;font-size:15px;line-height:15px;color:#000;left:586px;width:400px;text-align:right;'>TELEFON:</div>
<div style='left:992px;top:684px;width:401px;height:27px;background:#c0c0c0;'></div>
<div style='left:851px;top:712px;width:546px;height:1px;background:#a0a0a0;'></div>
<div style='left:851px;top:713px;width:546px;height:1px;background:#ffffff;'></div>
<div style='left:854px;top:742px;width:539px;height:27px;background:#c0c0c0;'></div>
<div style='left:854px;top:770px;width:539px;height:27px;background:#c0c0c0;'></div>
<div style='left:850px;top:812px;width:549px;height:30px;background:#fff;border-left:1px solid #a0a0a0;'></div>
<div style='left:9px;top:865px;width:1414px;height:26px;border-top:1px solid #a0a0a0;border-left:1px solid #a0a0a0;border-right:1px solid #fff;border-bottom:1px solid #fff;'></div>
<div style='left:11px;top:867px;width:200px;height:21px;background:#c0c0c0;'></div>
<div class='t' style='top:869px;font-size:16px;line-height:16px;color:#000;left:50px;'>SAM. 11.06.2016</div>
<div style='left:1149px;top:867px;width:20px;height:21px;background:#c0c0c0;'></div>
<div class='t' style='top:869px;font-size:16px;line-height:16px;color:#000;left:767px;width:400px;text-align:right;'>19</div>
<div style='left:1171px;top:867px;width:250px;height:21px;background:#c0c0c0;'></div>
<div class='t' style='top:869px;font-size:16px;line-height:16px;color:#000;left:1020px;width:400px;text-align:right;'>Pieper</div>
</body></html>
